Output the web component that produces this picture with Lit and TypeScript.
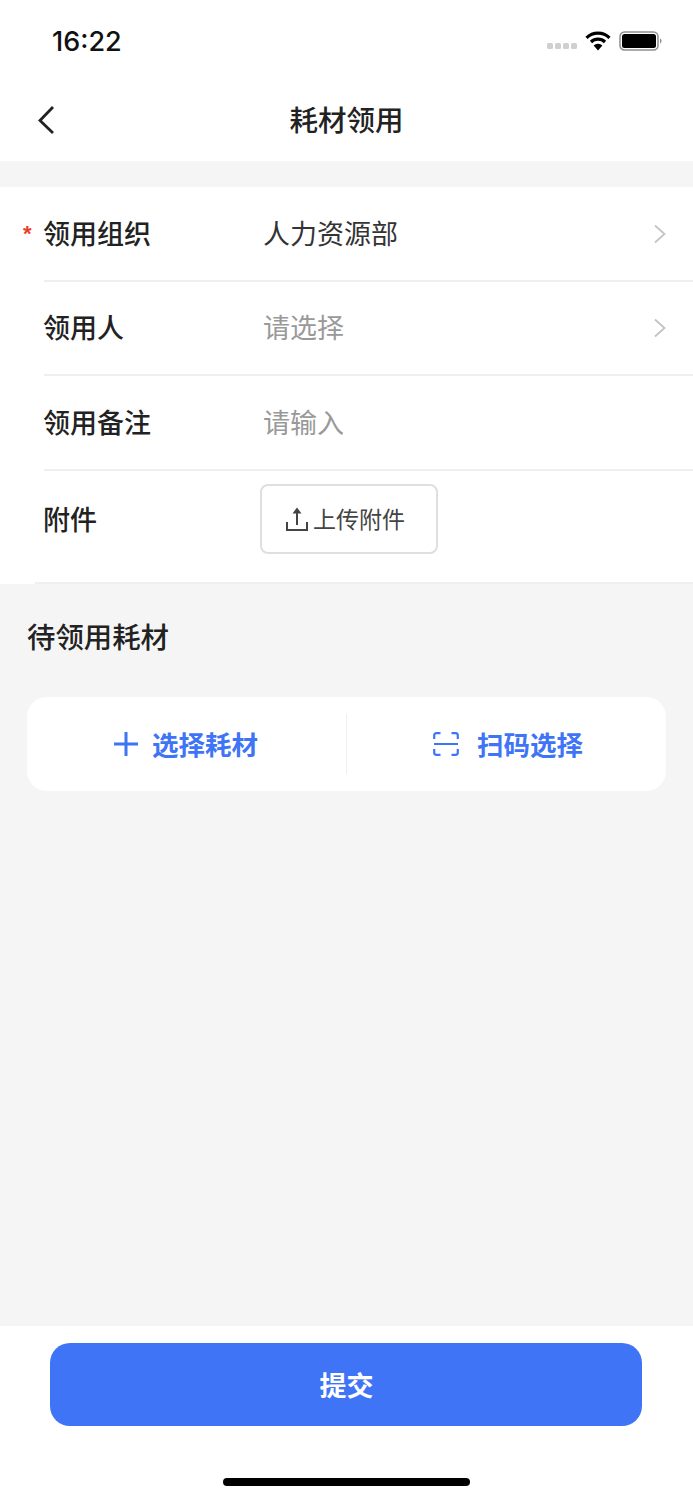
import { LitElement, html, css } from "lit";
import { customElement } from "lit/decorators.js";

const chevron = html`<svg class="chev" width="14" height="20" viewBox="0 0 14 20"><path d="M2 1.5 L11.5 10 L2 18.5" fill="none" stroke="#c4c4c4" stroke-width="1.8"/></svg>`;

@customElement("app-root")
export class AppRoot extends LitElement {
  static styles = css`
    :host { display: block; width: 693px; height: 1500px; background: #f5f5f5; font-family: "Noto Sans CJK SC", "Liberation Sans", sans-serif; color: #222; overflow: hidden; }
    .page { display: flex; flex-direction: column; height: 1500px; }
    .status { height: 80px; box-sizing: border-box; background: #fff; display: flex; align-items: flex-start; justify-content: space-between; padding: 25px 30px 0 52px; flex: none; }
    .time { font: 500 27px/34px Inter, "Liberation Sans", sans-serif; color: #111; letter-spacing: 0; }
    .sys { display: flex; align-items: flex-start; padding-top: 6px; }
    .dots { display: flex; gap: 2px; margin: 12px 8px 0 0; }
    .dots i { width: 6px; height: 6px; border-radius: 1.5px; background: #cfcfcf; display: block; }
    .wifi { margin-right: 8px; }
    .nav { height: 81px; background: #fff; display: flex; align-items: center; justify-content: center; position: relative; flex: none; }
    .nav h1 { margin: -3px 0 0; font-size: 28.5px; font-weight: 500; line-height: 40px; color: #222; }
    .back { position: absolute; left: 36px; top: 25px; }
    .form { margin-top: 26px; background: #fff; flex: none; }
    .row { height: 95px; box-sizing: border-box; margin-left: 44px; display: flex; align-items: center; border-bottom: 2px solid #efefef; position: relative; padding-right: 26px; }
    .row.r2 { height: 94px; }
    .label { width: 220px; font-size: 27px; font-weight: 500; color: #222; flex: none; margin-top: -3px; margin-left: -1px; }
    .value { flex: 1; font-size: 27px; color: #333; margin-top: -3px; }
    .ph { color: #999; }
    .req { position: absolute; left: -21px; top: 36px; color: #e8402f; font: 700 22px/22px "Liberation Sans", sans-serif; }
    .row.attach { height: 113px; margin-left: 35px; padding-left: 9px; padding-bottom: 16px; }
    .attach .label { margin-top: 0; }
    .upload { margin-left: -3px; width: 178px; height: 70px; box-sizing: border-box; border: 2px solid #dfdfdf; border-radius: 8px; display: flex; align-items: center; gap: 5px; padding-left: 24px; font-size: 23px; color: #444; background: #fff; }
    .upload span { margin-top: -2px; }
    .section { font-size: 28.4px; font-weight: 500; color: #222; margin: 34px 0 0 27px; line-height: 36px; flex: none; }
    .actions { margin: 43px 27px 0; height: 94px; background: #fff; border-radius: 20px; display: flex; align-items: center; flex: none; }
    .act { flex: 1; display: flex; align-items: center; justify-content: center; gap: 13px; color: #3f74f6; font-size: 26.5px; font-weight: 700; }
    .act.scan { gap: 18px; }
    .act.scan svg { margin-left: 5px; }
    .act span { margin: -1px 2px 0 0; }
    .sep { width: 1px; height: 60px; background: #f0f0f0; flex: none; }
    .spacer { flex: 1; }
    .foot { height: 174px; box-sizing: border-box; background: #fff; padding: 17px 51px 0 50px; flex: none; position: relative; }
    .submit { height: 83px; border-radius: 20px; background: #3f74f6; color: #fff; display: flex; align-items: center; justify-content: center; font-size: 27px; font-weight: 700; padding-left: 1px; }
    .home { position: absolute; left: 223px; bottom: 14px; width: 247px; height: 8px; border-radius: 4px; background: #000; }
  `;

  render() {
    return html`<div class="page">
      <div class="status">
        <div class="time">16:22</div>
        <div class="sys">
          <div class="dots"><i></i><i></i><i></i><i></i></div>
          <svg class="wifi" width="26" height="20" viewBox="0 0 26 20">
            <path d="M1.5 6.8 A16.5 16.5 0 0 1 24.5 6.8" fill="none" stroke="#000" stroke-width="3.2"/>
            <path d="M6 11 A10.2 10.2 0 0 1 20 11" fill="none" stroke="#000" stroke-width="3.2"/>
            <path d="M13 19.5 L8.6 14.6 A6.4 6.4 0 0 1 17.4 14.6 Z" fill="#000"/>
          </svg>
          <svg width="44" height="20" viewBox="0 0 44 20">
            <rect x="1" y="1" width="38" height="18" rx="4.5" fill="none" stroke="#8e8e8e" stroke-width="1.5"/>
            <rect x="3" y="3" width="34" height="14" rx="2.5" fill="#000"/>
            <path d="M41 7.5 C43 8 43 12 41 12.5 Z" fill="#8e8e8e"/>
          </svg>
        </div>
      </div>
      <div class="nav">
        <svg class="back" width="22" height="30" viewBox="0 0 22 30"><path d="M17 2 L4 15.5 L17 28" fill="none" stroke="#222" stroke-width="2.8"/></svg>
        <h1>耗材领用</h1>
      </div>
      <div class="form">
        <div class="row"><span class="req">*</span><div class="label">领用组织</div><div class="value">人力资源部</div>${chevron}</div>
        <div class="row r2"><div class="label">领用人</div><div class="value ph">请选择</div>${chevron}</div>
        <div class="row"><div class="label">领用备注</div><div class="value ph">请输入</div></div>
        <div class="row attach">
          <div class="label">附件</div>
          <div class="upload">
            <svg width="22" height="24" viewBox="0 0 22 24"><path d="M11 4 V18 M1 15 V23 H21 V15" fill="none" stroke="#444" stroke-width="2"/><path d="M6.5 6.5 L11 0.5 L15.5 6.5 Z" fill="#444"/></svg>
            <span>上传附件</span>
          </div>
        </div>
      </div>
      <div class="section">待领用耗材</div>
      <div class="actions">
        <div class="act">
          <svg width="26" height="26" viewBox="0 0 26 26"><path d="M13 1 V25 M1 13 H25" stroke="#3f74f6" stroke-width="3" fill="none"/></svg>
          <span>选择耗材</span>
        </div>
        <div class="sep"></div>
        <div class="act scan">
          <svg width="26" height="24" viewBox="0 0 26 24"><path d="M1.2 7 V3.5 Q1.2 1.2 3.5 1.2 H7.5 M18.5 1.2 H22.5 Q24.8 1.2 24.8 3.5 V7 M1.2 17 V20.5 Q1.2 22.8 3.5 22.8 H7.5 M18.5 22.8 H22.5 Q24.8 22.8 24.8 20.5 V17 M1 12 H25" stroke="#3f74f6" stroke-width="2.2" fill="none"/></svg>
          <span>扫码选择</span>
        </div>
      </div>
      <div class="spacer"></div>
      <div class="foot">
        <div class="submit">提交</div>
        <div class="home"></div>
      </div>
    </div>`;
  }
}
